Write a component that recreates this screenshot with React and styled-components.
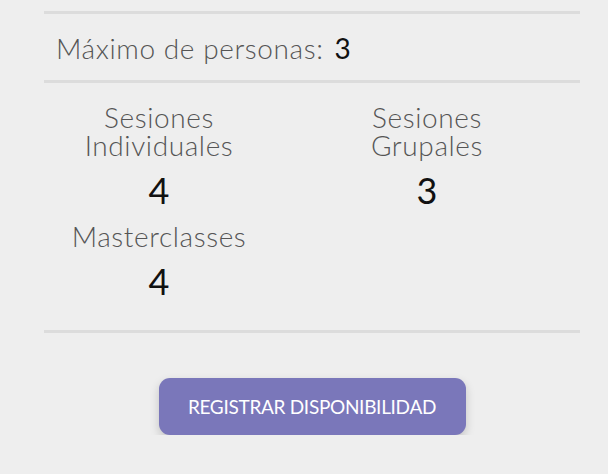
import React from 'react';
import styled, { createGlobalStyle } from 'styled-components';

const GlobalStyle = createGlobalStyle`
  html, body {
    margin: 0;
    padding: 0;
    background: #eeeeee;
  }
  body {
    font-family: 'Lato', 'Open Sans', sans-serif;
  }
`;

const stats = [
  { label: ['Sesiones', 'Individuales'], value: 4 },
  { label: ['Sesiones', 'Grupales'], value: 3 },
  { label: ['Masterclasses'], value: 4 }
];

export default function App() {
  return (
    <>
      <GlobalStyle />
      <Panel>
        <Divider top={11} />
        <MaxRow>
          <Label>Máximo de personas:</Label>
          <Value>3</Value>
        </MaxRow>
        <Divider />
        <StatsGrid>
          {stats.map((s, i) => (
            <Stat key={i}>
              <StatLabel>
                {s.label.map((l, j) => (
                  <React.Fragment key={l}>
                    {j > 0 && <br />}
                    {l}
                  </React.Fragment>
                ))}
              </StatLabel>
              <StatValue>{s.value}</StatValue>
            </Stat>
          ))}
        </StatsGrid>
        <Divider />
        <Actions>
          <Button>REGISTRAR DISPONIBILIDAD</Button>
        </Actions>
      </Panel>
    </>
  );
}

const Panel = styled.div`
  width: 536px;
  margin-left: 44px;
  display: flex;
  flex-direction: column;
`;

const Divider = styled.div`
  height: 3px;
  margin-top: ${p => (p.top ? `${p.top}px` : '0')};
  background: #dcdcdc;
`;

const MaxRow = styled.div`
  display: flex;
  align-items: baseline;
  gap: 11px;
  padding: 20px 12px 18px;
  font-size: 28px;
  line-height: 28px;
  font-weight: 300;
  letter-spacing: 0.6px;
`;

const Label = styled.span`
  color: #555555;
`;

const Value = styled.span`
  color: #111111;
  font-weight: 400;
`;

const StatsGrid = styled.div`
  display: grid;
  grid-template-columns: 230px 230px;
  column-gap: 38px;
  row-gap: 14px;
  padding: 20px 0 31px;
`;

const Stat = styled.div`
  display: flex;
  flex-direction: column;
  align-items: center;
  text-align: center;
`;

const StatLabel = styled.div`
  color: #555555;
  font-size: 28px;
  line-height: 28px;
  font-weight: 300;
  letter-spacing: 0.6px;
`;

const StatValue = styled.div`
  margin-top: 13px;
  color: #111111;
  font-size: 36px;
  line-height: 36px;
`;

const Actions = styled.div`
  display: flex;
  justify-content: center;
  padding-top: 45px;
`;

const Button = styled.button`
  width: 307px;
  height: 57px;
  border: none;
  border-radius: 11px;
  background: #7a77ba;
  color: #ffffff;
  font-family: 'Lato', sans-serif;
  font-size: 19px;
  letter-spacing: -0.3px;
  box-shadow: 0 4px 10px rgba(0, 0, 0, 0.18);
  cursor: pointer;
`;
